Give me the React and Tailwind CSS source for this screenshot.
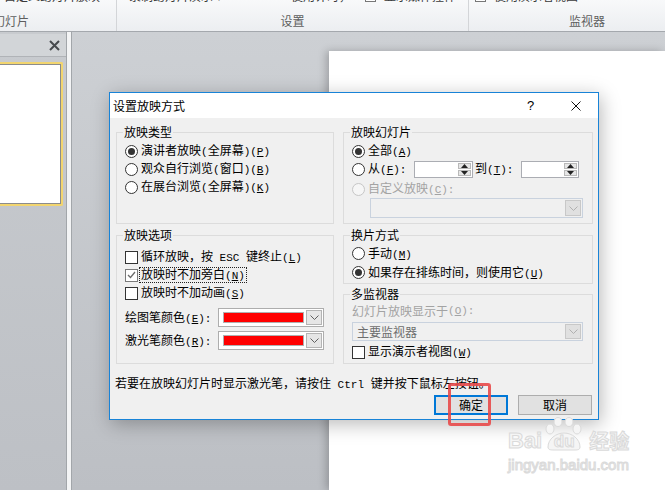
import React from "react";

// mixed text: ascii runs get the narrow mono face, "&X" marks the mnemonic letter
function Txt({ s }) {
  return s.split(/([\x20-\x7e]+)/).map((p, i) => {
    if (!p) return null;
    if (!/^[\x20-\x7e]+$/.test(p)) return <span key={i}>{p}</span>;
    const k = p.indexOf("&");
    return (
      <span key={i} className="font-['Liberation_Mono',monospace] text-[11px] whitespace-pre">
        {k < 0 ? p : (
          <>
            {p.slice(0, k)}
            <u className="underline-offset-1">{p[k + 1]}</u>
            {p.slice(k + 2)}
          </>
        )}
      </span>
    );
  });
}

function Radio({ checked, disabled }) {
  return (
    <span
      className={`w-[13px] h-[13px] rounded-full border flex items-center justify-center shrink-0 ${
        disabled ? "border-[#c6c6c6] bg-[#f6f6f6]" : "border-[#333333] bg-white"
      }`}
    >
      {checked && <span className="w-[7px] h-[7px] rounded-full bg-[#333333]" />}
    </span>
  );
}

function Check({ checked }) {
  return (
    <span
      className={`w-[13px] h-[13px] border flex items-center justify-center shrink-0 bg-white ${
        checked ? "border-[#7a7a7a]" : "border-[#333333]"
      }`}
    >
      {checked && (
        <svg width="9" height="8" viewBox="0 0 9 8">
          <path d="M1 4l2.5 2.5L8 1" stroke="#6a6a6a" strokeWidth="1.3" fill="none" />
        </svg>
      )}
    </span>
  );
}

function Chevron({ c = "#606060" }) {
  return (
    <svg width="9" height="5" viewBox="0 0 9 5">
      <path d="M0.5 0.5L4.5 4.5L8.5 0.5" fill="none" stroke={c} strokeWidth="1" />
    </svg>
  );
}

function Spin({ w }) {
  return (
    <div className={`${w} h-[17px] border border-[#abadb3] bg-white flex justify-end shrink-0`}>
      <div className="w-[15px] flex flex-col bg-white p-[1px] gap-[1px]">
        <div className="flex-1 bg-[#e6e6e6] border border-[#b9b9b9] flex items-center justify-center">
          <svg width="7" height="4" viewBox="0 0 7 4">
            <path d="M3.5 0L7 4H0z" fill="#222" />
          </svg>
        </div>
        <div className="flex-1 bg-[#e6e6e6] border border-[#b9b9b9] flex items-center justify-center">
          <svg width="7" height="4" viewBox="0 0 7 4">
            <path d="M0 0H7L3.5 4z" fill="#222" />
          </svg>
        </div>
      </div>
    </div>
  );
}

function ColorCombo() {
  return (
    <div className="w-[106px] h-[19px] border border-[#adadad] bg-white flex items-center pl-[4px] pr-[1px]">
      <div className="w-[81px] h-[11px] bg-[#ff0000] border border-[#b0b0b0]" />
      <div className="ml-auto w-[16px] h-[15px] bg-[#e6e6e6] border border-[#b4b4b4] flex items-center justify-center">
        <Chevron />
      </div>
    </div>
  );
}

function Group({ title, className, children }) {
  return (
    <div className={`relative border border-[#dcdcdc] shrink-0 ${className}`}>
      <span className="absolute -top-[8px] left-[6px] px-[1px] bg-[#f0f0f0] leading-[14px]">{title}</span>
      {children}
    </div>
  );
}

function Ribbon() {
  return (
    <div className="h-[32px] shrink-0 flex overflow-hidden bg-gradient-to-b from-[#f8f9fa] to-[#eceef1] border-b border-[#a4a8ad] text-[#5e5e5e]">
      <div className="w-[117px] shrink-0 border-r border-[#d3d5d8] flex flex-col">
        <div className="h-[14px] pl-[4px]">
          <span className="block -mt-[10px] leading-[12px] text-[#3a3a3a] whitespace-nowrap">自定义幻灯片放映</span>
        </div>
        <span className="-ml-[7px] leading-[14px] whitespace-nowrap">幻灯片</span>
      </div>
      <div className="w-[352px] shrink-0 border-r border-[#d3d5d8] flex flex-col">
        <div className="h-[14px] flex items-start text-[#3a3a3a] whitespace-nowrap">
          <span className="block -mt-[10px] leading-[12px] ml-[12px] w-[162px]">录制幻灯片演示 ▾</span>
          <span className="block -mt-[10px] leading-[12px] w-[74px]">使用计时，</span>
          <span className="block -mt-[6px] w-[11px] h-[8px] border border-[#777] bg-white" />
          <span className="block -mt-[10px] leading-[12px] ml-[8px]">显示媒体控件</span>
        </div>
        <span className="text-center leading-[14px]">设置</span>
      </div>
      <div className="w-[236px] shrink-0 flex flex-col">
        <div className="h-[14px] flex items-start text-[#3a3a3a] whitespace-nowrap">
          <span className="block -mt-[6px] ml-[6px] w-[11px] h-[8px] border border-[#777] bg-white" />
          <span className="block -mt-[10px] leading-[12px] ml-[8px]">使用演示者视图</span>
        </div>
        <span className="text-center leading-[14px]">监视器</span>
      </div>
    </div>
  );
}

function LeftPanel() {
  return (
    <div className="w-[66px] shrink-0 bg-gradient-to-b from-[#c8cbcf] to-[#bdc0c5] pt-[2px] flex flex-col">
      <div className="h-[23px] bg-[#d2d5d8] border-b border-[#b0b3b7] flex items-center justify-end pr-[6px]">
        <svg width="11" height="11" viewBox="0 0 11 11">
          <path d="M1 1L10 10M10 1L1 10" stroke="#474a4e" strokeWidth="2" />
        </svg>
      </div>
      <div className="mt-[5px] w-[63px] h-[144px] border-2 border-l-0 border-[#f2d56f] rounded-r-[2px]">
        <div className="h-full bg-white border border-l-0 border-[#8c8c8c]" />
      </div>
    </div>
  );
}

function Dialog() {
  return (
    <div className="absolute left-[109px] top-[92px] w-[490px] h-[328px] border border-[#1883d7] bg-[#f0f0f0] shadow-[2px_4px_18px_rgba(0,0,0,0.28)] flex flex-col">
      <div className="h-[25px] shrink-0 bg-white flex items-center pl-[3px]">
        <span className="leading-[14px]">设置放映方式</span>
        <span className="ml-auto w-[8px] text-[13px] leading-[14px] font-['Liberation_Sans',sans-serif]">?</span>
        <svg className="ml-[36px] mr-[17px]" width="10" height="10" viewBox="0 0 10 10">
          <path d="M0.5 0.5L9.5 9.5M9.5 0.5L0.5 9.5" stroke="#111" strokeWidth="1" />
        </svg>
      </div>

      <div className="flex-1 pl-[6px] pt-[14px] flex flex-col">
        <div className="flex gap-[9px]">
          <div className="w-[218px] flex flex-col">
            <Group title="放映类型" className="h-[92px]">
              <div className="pt-[9px] pl-[8px] flex flex-col">
                <div className="h-[18px] flex items-center gap-[3px]">
                  <Radio checked />
                  <span><Txt s="演讲者放映(全屏幕)(&P)" /></span>
                </div>
                <div className="h-[18px] flex items-center gap-[3px]">
                  <Radio />
                  <span><Txt s="观众自行浏览(窗口)(&B)" /></span>
                </div>
                <div className="h-[18px] flex items-center gap-[3px]">
                  <Radio />
                  <span><Txt s="在展台浏览(全屏幕)(&K)" /></span>
                </div>
              </div>
            </Group>

            <Group title="放映选项" className="h-[129px] mt-[11px]">
              <div className="pt-[12px] pl-[8px] flex flex-col">
                <div className="h-[18px] flex items-center gap-[3px]">
                  <Check />
                  <span><Txt s="循环放映，按 ESC 键终止(&L)" /></span>
                </div>
                <div className="h-[18px] flex items-center gap-[3px]">
                  <Check checked />
                  <span className="-ml-[2px] px-[1px] border border-dotted border-[#222] leading-[12px]">
                    <Txt s="放映时不加旁白(&N)" />
                  </span>
                </div>
                <div className="h-[18px] flex items-center gap-[3px]">
                  <Check />
                  <span><Txt s="放映时不加动画(&S)" /></span>
                </div>
                <div className="mt-[6px] h-[19px] flex items-center">
                  <span className="w-[93px]"><Txt s="绘图笔颜色(&E):" /></span>
                  <ColorCombo />
                </div>
                <div className="mt-[4px] h-[19px] flex items-center">
                  <span className="w-[93px]"><Txt s="激光笔颜色(&R):" /></span>
                  <ColorCombo />
                </div>
              </div>
            </Group>
          </div>

          <div className="w-[250px] flex flex-col">
            <Group title="放映幻灯片" className="h-[92px]">
              <div className="pt-[9px] pl-[8px] flex flex-col">
                <div className="h-[18px] flex items-center gap-[3px]">
                  <Radio checked />
                  <span><Txt s="全部(&A)" /></span>
                </div>
                <div className="h-[18px] flex items-center">
                  <Radio />
                  <span className="w-[49px] pl-[3px]"><Txt s="从(&F):" /></span>
                  <Spin w="w-[59px]" />
                  <span className="w-[48px] pl-[2px]"><Txt s="到(&T):" /></span>
                  <Spin w="w-[58px]" />
                </div>
                <div className="mt-[2px] h-[18px] flex items-center gap-[3px] text-[#a3a3a3]">
                  <Radio disabled />
                  <span><Txt s="自定义放映(&C):" /></span>
                </div>
                <div className="ml-[18px] w-[213px] h-[20px] border border-[#c9d2de] bg-[#f0f0f0] flex justify-end p-[1px]">
                  <div className="w-[16px] bg-[#e0e0e0] border border-[#c8c8c8] flex items-center justify-center">
                    <Chevron c="#b0b0b0" />
                  </div>
                </div>
              </div>
            </Group>

            <Group title="换片方式" className="h-[49px] mt-[11px]">
              <div className="pt-[8px] pl-[8px] flex flex-col">
                <div className="h-[19px] flex items-center gap-[3px]">
                  <Radio />
                  <span><Txt s="手动(&M)" /></span>
                </div>
                <div className="h-[19px] flex items-center gap-[3px]">
                  <Radio checked />
                  <span><Txt s="如果存在排练时间，则使用它(&U)" /></span>
                </div>
              </div>
            </Group>

            <Group title="多监视器" className="h-[70px] mt-[10px]">
              <div className="pt-[7px] pl-[8px] flex flex-col">
                <div className="h-[18px] flex items-center text-[#a3a3a3]">
                  <Txt s="幻灯片放映显示于(&O):" />
                </div>
                <div className="mt-[2px] w-[231px] h-[19px] border border-[#c9d2de] bg-[#f0f0f0] flex items-center pl-[4px] p-[1px]">
                  <span className="text-[#6d6d6d] leading-[14px]">主要监视器</span>
                  <div className="ml-auto w-[16px] h-full bg-[#e0e0e0] border border-[#c8c8c8] flex items-center justify-center">
                    <Chevron c="#b0b0b0" />
                  </div>
                </div>
                <div className="mt-[2px] h-[18px] flex items-center gap-[3px]">
                  <Check />
                  <span><Txt s="显示演示者视图(&W)" /></span>
                </div>
              </div>
            </Group>
          </div>
        </div>

        <div className="mt-[12px] -ml-[1px] leading-[14px] whitespace-nowrap">
          <Txt s="若要在放映幻灯片时显示激光笔，请按住 Ctrl 键并按下鼠标左按钮。" />
        </div>

        <div className="w-[476px] mt-[3px] flex justify-end gap-[10px]">
          <button className="w-[74px] h-[20px] border-2 border-[#0078d7] bg-[#e1e1e1] flex items-center justify-center leading-[14px]">
            确定
          </button>
          <button className="w-[74px] h-[20px] border border-[#adadad] bg-[#e1e1e1] flex items-center justify-center leading-[14px]">
            取消
          </button>
        </div>
      </div>
    </div>
  );
}

function Watermark() {
  return (
    <div className="absolute left-[508px] top-[417px] flex flex-col font-['Liberation_Sans',sans-serif] font-bold text-[#f5f5f5] [-webkit-text-stroke:1px_#dadada]">
      <div className="flex items-end h-[34px]">
        <span className="text-[22px] leading-[20px]">Bai</span>
        <div className="relative w-[44px] h-[34px] flex items-end justify-center">
          <svg className="absolute left-0 top-0" width="44" height="34" viewBox="0 0 44 34">
            <g fill="#f5f5f5" stroke="#dadada" strokeWidth="1">
              <ellipse cx="8" cy="12" rx="4" ry="5" />
              <ellipse cx="16" cy="5" rx="4" ry="4.5" />
              <ellipse cx="27" cy="5" rx="4" ry="4.5" />
              <ellipse cx="35" cy="12" rx="4" ry="5" />
              <path d="M6 30c0-8 8-14 16-14s16 6 16 14c0 3-3 3-6 3H12c-3 0-6 0-6-3z" />
            </g>
          </svg>
          <span className="relative text-[17px] leading-[18px]">du</span>
        </div>
        <span className="ml-[3px] text-[20px] leading-[20px] font-['Noto_Sans_CJK_SC',sans-serif]">经验</span>
      </div>
      <span className="mt-[6px] text-[15px] leading-[15px] font-normal">jingyan.baidu.com</span>
    </div>
  );
}

export default function App() {
  return (
    <div className="relative w-[665px] h-[490px] overflow-hidden bg-[#c6c9cd] font-['Noto_Sans_CJK_SC',sans-serif] text-[12px] leading-[14px] text-black">
      <div className="flex flex-col h-full">
        <Ribbon />
        <div className="flex flex-1 min-h-0">
          <LeftPanel />
          <div className="w-[6px] shrink-0 border-x border-[#a2a6aa] bg-[#f3f4f5]" />
          <div className="flex-1 flex pl-[257px] pt-[19px] bg-gradient-to-b from-[#cdd0d4] to-[#bcbfc4]">
            <div className="flex-1 bg-white shadow-[-3px_0_8px_rgba(0,0,0,0.22)]" />
          </div>
        </div>
      </div>

      <Dialog />
      <Watermark />

      {/* red annotation box around OK */}
      <div className="absolute left-[448px] top-[383px] w-[43px] h-[43px] border-[3px] border-[#e84a4a] rounded-[3px] opacity-90" />
    </div>
  );
}
